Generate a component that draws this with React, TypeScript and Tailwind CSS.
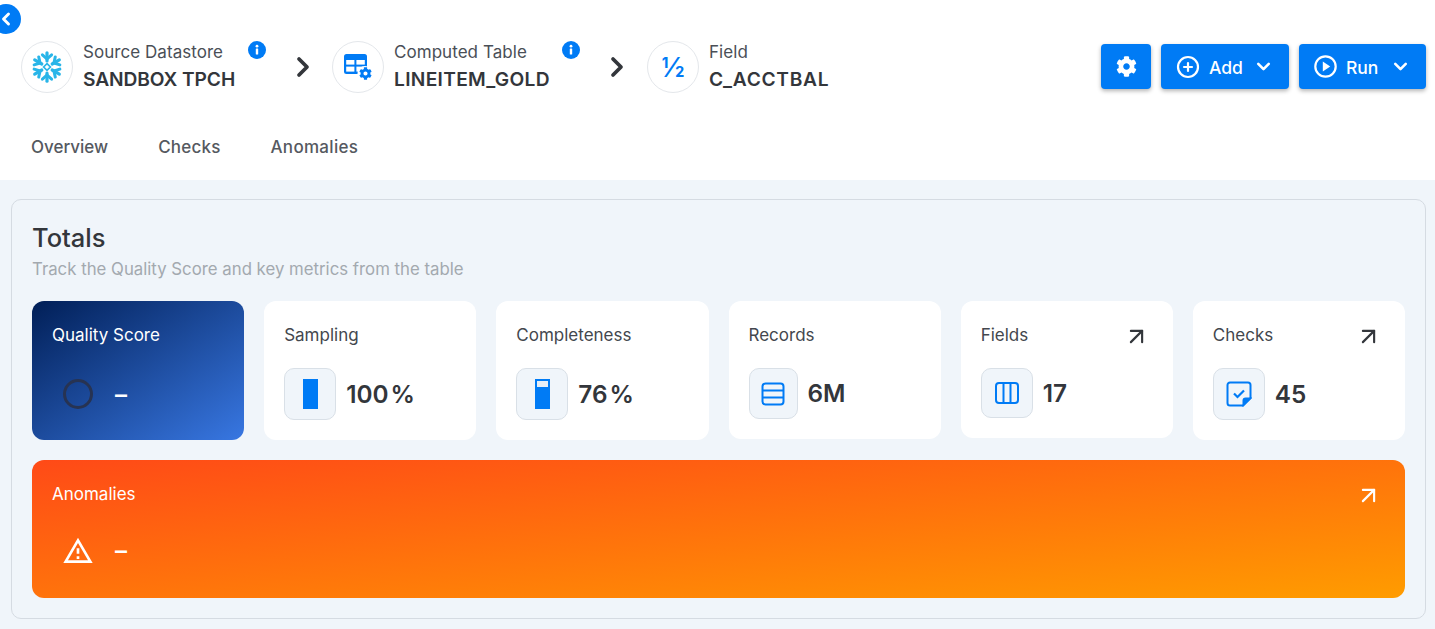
import React from "react";
import { FaCog } from "react-icons/fa";
import { ChevronRight, ChevronDown, ChevronLeft, ArrowUpRight, CirclePlus } from "lucide-react";

function InfoDot() {
  return (
    <svg width="18" height="18" viewBox="0 0 18 18" className="shrink-0">
      <circle cx="9" cy="9" r="9" fill="#007bf5" />
      <rect x="7.8" y="7.6" width="2.4" height="6" rx="0.5" fill="#fff" />
      <circle cx="9" cy="5.2" r="1.4" fill="#fff" />
    </svg>
  );
}

function Snowflake() {
  return (
    <svg width="32" height="32" viewBox="-16 -16 32 32">
      {[0, 60, 120, 180, 240, 300].map((a) => (
        <g key={a} transform={`rotate(${a})`} stroke="#29b5e8" fill="none" strokeLinecap="round" strokeLinejoin="round">
          <path d="M0 -6 L0 -14.2" strokeWidth="3.2" />
          <path d="M-4.6 -12.2 L0 -8 L4.6 -12.2" strokeWidth="3" />
        </g>
      ))}
      <path d="M0 -3.4 L3.4 0 L0 3.4 L-3.4 0 Z" fill="#fff" stroke="#29b5e8" strokeWidth="1.7" />
    </svg>
  );
}

function TableGear() {
  return (
    <div className="relative w-[28px] h-[26px]">
      <svg width="28" height="26" viewBox="0 0 28 26">
        <rect x="0" y="0" width="23" height="20" rx="2.5" fill="#007bf5" />
        <rect x="2.2" y="6" width="8.2" height="4.6" fill="#fff" />
        <rect x="12.4" y="6" width="8.4" height="4.6" fill="#fff" />
        <rect x="2.2" y="12.6" width="8.2" height="5" fill="#fff" />
        <rect x="12.4" y="12.6" width="8.4" height="5" fill="#fff" />
        <circle cx="21" cy="19.5" r="7.5" fill="#fff" />
      </svg>
      <FaCog className="absolute right-0 bottom-0 text-[#007bf5]" size={13} />
    </div>
  );
}

function PlayCircle() {
  return (
    <svg width="23" height="23" viewBox="0 0 23 23">
      <circle cx="11.5" cy="11.5" r="10.2" fill="none" stroke="#fff" strokeWidth="2.2" />
      <path d="M8.8 6.6 L16.2 11.5 L8.8 16.4 Z" fill="#fff" />
    </svg>
  );
}

function Crumb({ icon, label, name, w, track, info }: { icon: React.ReactNode; label: string; name: string; w: string; track: string; info?: boolean }) {
  return (
    <div className="flex items-start shrink-0">
      <div className="w-[52px] h-[52px] rounded-full border border-[#e4e7eb] bg-white flex items-center justify-center shrink-0">{icon}</div>
      <div className={`ml-[10px] ${w}`}>
        <div className="text-[17px] leading-[22px] text-[#4a4f57] font-normal tracking-[0.05px] whitespace-nowrap">{label}</div>
        <div className={`text-[19.2px] leading-[28px] mt-[2px] text-[#33363b] font-semibold whitespace-nowrap ${track}`}>{name}</div>
      </div>
      {info && <InfoDot />}
    </div>
  );
}

function Sep({ cls }: { cls: string }) {
  return <ChevronRight size={32} strokeWidth={2.8} className={`text-[#33363b] shrink-0 mt-[10px] ${cls}`} />;
}

function Btn({ icon, label, w }: { icon: React.ReactNode; label: string; w: string }) {
  return (
    <button className={`h-[45px] ${w} bg-[#007bf5] rounded-[4px] shadow-[0_2px_4px_rgba(0,0,0,0.3)] flex items-center text-white text-[17.5px] font-medium pl-[15px]`}>
      {icon}
      <span className="ml-[9px] mt-[3px]">{label}</span>
      <ChevronDown size={21} strokeWidth={3} className="ml-auto mr-[15px]" />
    </button>
  );
}

function IconBox({ children, size }: { children: React.ReactNode; size: string }) {
  return (
    <div className={`${size} rounded-[10px] border border-[#d9e0e7] bg-[#f0f5fa] flex items-center justify-center shrink-0`}>{children}</div>
  );
}

function Stat({ label, value, icon, box, h, arrow }: { label: string; value: string; icon: React.ReactNode; box: string; h: string; arrow?: boolean }) {
  return (
    <div className={`bg-white rounded-[12px] px-[20px] pt-[22px] ${h}`}>
      <div className="flex items-center justify-between h-[24px]">
        <span className="text-[17px] leading-[24px] text-[#43474e]">{label}</span>
        {arrow && <ArrowUpRight size={27} strokeWidth={1.9} className="text-[#33363b] mr-[3px] mt-[2px] shrink-0" />}
      </div>
      <div className="flex items-center mt-[21px]">
        <IconBox size={box}>{icon}</IconBox>
        <span className="ml-[10px] text-[24.3px] font-semibold text-[#33363b] whitespace-nowrap [word-spacing:-4px]">{value}</span>
      </div>
    </div>
  );
}

export default function App() {
  return (
    <div className="relative w-[1435px] h-[629px] overflow-hidden bg-[#f0f5fa] font-['Inter',sans-serif]">
      <button className="absolute left-[-9px] top-[4px] w-[30px] h-[30px] rounded-full bg-[#007bf5] flex items-center justify-center pl-[9px]">
        <ChevronLeft size={20} strokeWidth={3.5} className="text-white -ml-[10px]" />
      </button>

      <div className="bg-white h-[180px] flex flex-col">
        <div className="flex items-start justify-between pl-[21px] pr-[9px] pt-[41px] h-[118px]">
          <div className="flex items-start">
            <Crumb icon={<Snowflake />} label="Source Datastore" name="SANDBOX TPCH" w="w-[165px]" track="tracking-[-0.1px]" info />
            <Sep cls="ml-[21px] mr-[13px]" />
            <Crumb icon={<TableGear />} label="Computed Table" name="LINEITEM_GOLD" w="w-[168px]" track="tracking-[0.3px]" info />
            <Sep cls="ml-[21px] mr-[14px]" />
            <Crumb icon={<span className="text-[27px] leading-none text-[#007bf5] font-medium">½</span>} label="Field" name="C_ACCTBAL" w="w-[140px]" track="tracking-[0.7px]" />
          </div>
          <div className="flex items-center gap-[10px] mt-[3px]">
            <button className="w-[50px] h-[45px] bg-[#007bf5] rounded-[4px] shadow-[0_2px_4px_rgba(0,0,0,0.3)] flex items-center justify-center text-white">
              <FaCog size={21} />
            </button>
            <Btn icon={<CirclePlus size={24} strokeWidth={2.2} />} label="Add" w="w-[128px]" />
            <Btn icon={<PlayCircle />} label="Run" w="w-[127px]" />
          </div>
        </div>
        <div className="flex items-center gap-[50px] pl-[31px] h-[60px] text-[#55595f] text-[17px] font-medium">
          <span>Overview</span>
          <span className="tracking-[0.2px]">Checks</span>
          <span className="tracking-[0.3px]">Anomalies</span>
        </div>
      </div>

      <div className="ml-[11px] w-[1415px] mt-[19px] h-[420px] rounded-[10px] border border-[#d5dbe2] px-[20px] pt-[20px]">
        <div className="text-[25.5px] leading-[36px] font-medium text-[#33363b]">Totals</div>
        <div className="text-[16.8px] leading-[24px] mt-[1px] text-[#a3a9af]">Track the Quality Score and key metrics from the table</div>

        <div className="grid grid-cols-6 gap-[20px] mt-[20px] items-start">
          <div className="h-[139px] rounded-[12px] bg-[linear-gradient(to_bottom_right,#011f57,#3877e2)] px-[20px] pt-[22px]">
            <div className="text-[17px] leading-[24px] text-white">Quality Score</div>
            <div className="flex items-center mt-[28px] pl-[11px]">
              <div className="w-[30px] h-[30px] rounded-full border-[3px] border-[#273352]" />
              <span className="ml-[22px] mt-[2px] text-[24px] font-semibold text-white">–</span>
            </div>
          </div>
          <Stat label="Sampling" value="100 %" box="w-[52px] h-[52px]" h="h-[139px]" icon={<div className="w-[15px] h-[30px] bg-[#007bf5]" />} />
          <Stat
            label="Completeness"
            value="76 %"
            box="w-[52px] h-[52px]"
            h="h-[139px]"
            icon={
              <div className="w-[15px] h-[30px] bg-[#007bf5] pt-[2px] px-[2px]">
                <div className="h-[6px] bg-[#e6eef7]" />
              </div>
            }
          />
          <Stat
            label="Records"
            value="6M"
            box="w-[49px] h-[51px]"
            h="h-[138px]"
            icon={
              <svg width="24" height="24" viewBox="0 0 24 24" fill="none" stroke="#007bf5" strokeWidth="2">
                <rect x="1.5" y="1.5" width="21" height="21" rx="3" />
                <path d="M1.5 8.5H22.5M1.5 15.5H22.5" />
              </svg>
            }
          />
          <Stat
            label="Fields"
            value="17"
            box="w-[52px] h-[50px]"
            h="h-[137px]"
            arrow
            icon={
              <svg width="24" height="22" viewBox="0 0 24 22" fill="none" stroke="#007bf5" strokeWidth="2">
                <rect x="1" y="1" width="22" height="20" rx="3" />
                <path d="M8.5 1V21M15.5 1V21" />
              </svg>
            }
          />
          <Stat
            label="Checks"
            value="45"
            box="w-[52px] h-[52px]"
            h="h-[139px]"
            arrow
            icon={
              <svg width="26" height="26" viewBox="0 0 26 26" fill="none" stroke="#007bf5" strokeWidth="2">
                <path d="M4 1.5H22A2.5 2.5 0 0 1 24.5 4V17L17 24.5H4A2.5 2.5 0 0 1 1.5 22V4A2.5 2.5 0 0 1 4 1.5Z" />
                <path d="M24 17.5H19.5A2 2 0 0 0 17.5 19.5V24Z" fill="#007bf5" />
                <path d="M8 12.5L11.5 16L18 9.5" strokeWidth="2.2" />
              </svg>
            }
          />
        </div>

        <div className="mt-[20px] h-[138px] rounded-[12px] bg-[linear-gradient(to_bottom_right,#ff4a17,#ff9c00)] px-[20px] pt-[22px]">
          <div className="flex items-center justify-between h-[24px]">
            <span className="text-[17px] leading-[24px] text-white">Anomalies</span>
            <ArrowUpRight size={27} strokeWidth={1.9} className="text-white mr-[3px] mt-[2px] shrink-0" />
          </div>
          <div className="flex items-center mt-[21px] pl-[10px] h-[48px]">
            <svg width="32" height="32" viewBox="0 0 24 24" fill="#fff">
              <path d="M12 5.99L19.53 19H4.47L12 5.99M12 2L1 21h22L12 2zm1 14h-2v2h2v-2zm0-6h-2v4h2v-4z" />
            </svg>
            <span className="ml-[21px] text-[24px] font-semibold text-white">–</span>
          </div>
        </div>
      </div>
    </div>
  );
}
